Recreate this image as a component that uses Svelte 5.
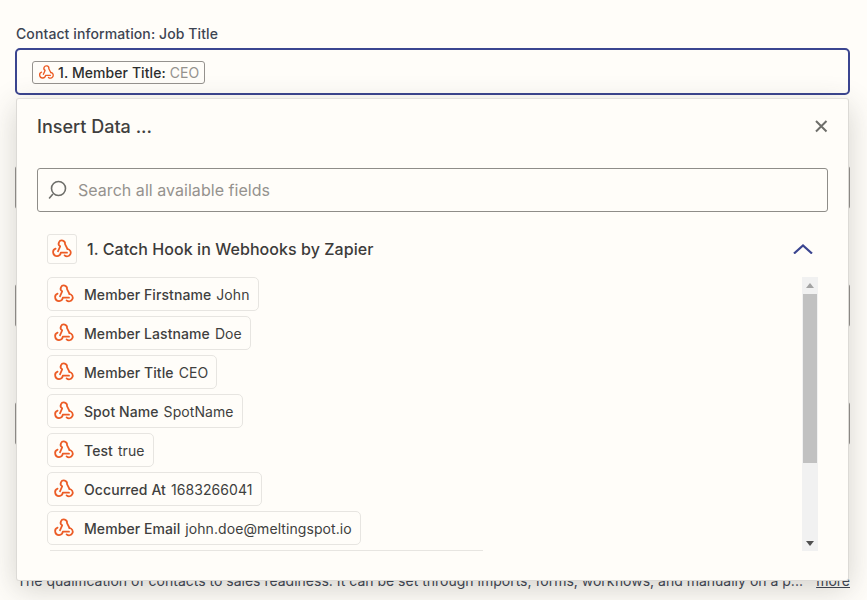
<script>
  // fields coming out of the catch hook step
  const fields = [
    { name: "Member Firstname", value: "John" },
    { name: "Member Lastname", value: "Doe" },
    { name: "Member Title", value: "CEO" },
    { name: "Spot Name", value: "SpotName" },
    { name: "Test", value: "true" },
    { name: "Occurred At", value: "1683266041" },
    { name: "Member Email", value: "john.doe@meltingspot.io" }
  ];
</script>

{#snippet hook(size)}
  <svg class="hook" width={size} height={size} viewBox="0 1 24 24" fill="none" stroke="#ec5c26" stroke-width="1.9" stroke-linecap="round" stroke-linejoin="round">
    <path d="M7.6 15.500 10 10.100A3.500 3.500 0 1 1 15.300 7.700L18 13" />
    <path d="M5 12.600A4.200 4.200 0 1 0 10.700 17H17.500" />
    <path d="M18 13A4 4 0 1 1 14.800 19.900" />
  </svg>
{/snippet}

<div class="page">
  <div class="label">Contact information: Job Title</div>
  <div class="field">
    <span class="token">
      {@render hook(17)}
      <b>1. Member Title:</b>
      <span class="token-value">CEO</span>
    </span>
  </div>

  <div class="behind">
    <div class="ghost"></div>
    <div class="ghost"></div>
    <div class="ghost"></div>
    <p class="hint">
      <span>The qualification of contacts to sales readiness. It can be set through imports, forms, workflows, and manually on a p...</span>
      <u>more</u>
    </p>
  </div>

  <div class="popup">
    <header>
      <h2>Insert Data ...</h2>
      <svg width="14" height="14" viewBox="0 0 14 14" stroke="#6e6e6a" stroke-width="2" fill="none">
        <path d="M2 2l10.500 10.500M12.500 2 2 12.500" />
      </svg>
    </header>

    <div class="search">
      <svg width="22" height="22" viewBox="0 0 22 22" fill="none" stroke="#6e6e6a" stroke-width="1.6" stroke-linecap="round">
        <circle cx="11.500" cy="9.500" r="7" />
        <path d="M5.500 15.500 2.500 19" />
      </svg>
      <span>Search all available fields</span>
    </div>

    <div class="step">
      <span class="step-icon">{@render hook(22)}</span>
      <h3>1. Catch Hook in Webhooks by Zapier</h3>
      <svg class="chevron" width="20" height="10" viewBox="0 0 20 10" fill="none" stroke="#3b4590" stroke-width="2.200">
        <path d="M1 9.500 10 1.500l9 8" />
      </svg>
    </div>

    <div class="results">
      <div class="list">
        {#each fields as field}
          <div class="item">
            {@render hook(22)}
            <b>{field.name}</b>
            <span>{field.value}</span>
          </div>
        {/each}
        <div class="rule"></div>
      </div>
      <div class="scrollbar">
        <span class="arrow up"></span>
        <div class="thumb"></div>
        <span class="arrow down"></span>
      </div>
    </div>
  </div>
</div>

<style>
  :global(body) {
    background: #fffdf9;
    overflow: hidden;
  }

  .page {
    position: relative;
    height: 600px;
    overflow: hidden;
    box-sizing: border-box;
    padding: 25px 17px 0 15px;
    font-family: Inter, "Liberation Sans", sans-serif;
    color: #403f3e;
  }

  .label {
    margin-left: 1px;
    font-size: 14px;
    line-height: 18px;
    font-weight: 500;
    letter-spacing: 0.1px;
    color: #3d4452;
  }

  .field {
    box-sizing: border-box;
    height: 47px;
    margin-top: 5px;
    padding: 11px 15px;
    border: 2px solid #3b4590;
    border-radius: 5px;
  }

  .token {
    display: inline-flex;
    align-items: center;
    box-sizing: border-box;
    height: 23px;
    padding: 0 5px 0 5px;
    gap: 3px;
    border: 1px solid #95928e;
    border-radius: 3px;
    font-size: 14px;
    color: #2d2e2e;
  }

  .token b {
    font-weight: 500;
    letter-spacing: 0.08px;
  }

  .token-value {
    margin-left: 1px;
    color: #95928e;
  }

  .behind {
    padding-top: 71px;
  }

  .ghost {
    box-sizing: border-box;
    height: 43px;
    margin-bottom: 75px;
    border-left: 2px solid #95928e;
    border-right: 2px solid #95928e;
    border-radius: 3px;
  }

  .hint {
    display: flex;
    justify-content: space-between;
    margin: 126px 0 0;
    padding: 0 0 0 2px;
    font-size: 14px;
    line-height: 20px;
    white-space: nowrap;
    color: #3d4452;
  }

  .popup {
    position: absolute;
    top: 98px;
    left: 16px;
    width: 833px;
    height: 483px;
    box-sizing: border-box;
    padding: 0 20px;
    background: #fffdf9;
    border: 1px solid #dcdad6;
    border-top-color: #e4e2de;
    border-radius: 3px;
    box-shadow: 0 8px 30px rgba(60, 58, 50, 0.22);
  }

  header {
    display: flex;
    align-items: center;
    justify-content: space-between;
    height: 54px;
  }

  h2 {
    margin: 0;
    font-size: 18px;
    font-weight: 500;
    color: #403f3e;
  }

  .search {
    display: flex;
    align-items: center;
    gap: 9px;
    box-sizing: border-box;
    height: 44px;
    margin-top: 15px;
    padding: 0 9px;
    border: 1px solid #8f8d89;
    border-radius: 3px;
    font-size: 16px;
    letter-spacing: 0.04px;
    color: #95928e;
  }

  .step {
    display: flex;
    align-items: center;
    height: 30px;
    margin: 22px 15px 0 10px;
  }

  .step-icon {
    display: flex;
    align-items: center;
    justify-content: center;
    box-sizing: border-box;
    width: 30px;
    height: 30px;
    border: 1px solid #e7e5e1;
    border-radius: 3px;
  }

  h3 {
    flex: 1;
    margin: 0 0 0 10px;
    font-size: 16px;
    font-weight: 500;
    letter-spacing: 0.06px;
    color: #3c3b3a;
  }

  .results {
    display: flex;
    justify-content: space-between;
    margin: 13px 10px 0;
    height: 274px;
  }

  .list {
    width: 436px;
    display: flex;
    flex-direction: column;
    align-items: flex-start;
    gap: 5px;
  }

  .item {
    display: flex;
    align-items: center;
    box-sizing: border-box;
    height: 34px;
    padding: 0 8px 0 5px;
    border: 1px solid #e7e5e1;
    border-radius: 5px;
    font-size: 14px;
    letter-spacing: 0.08px;
    color: #403f3e;
  }

  .item b {
    margin: 0 5px 0 9px;
    font-weight: 500;
  }

  .rule {
    align-self: stretch;
    height: 1px;
    margin: 0 0 0 3px;
    background: #e7e5e1;
  }

  .scrollbar {
    display: flex;
    flex-direction: column;
    align-items: center;
    width: 16px;
    padding: 0 1px;
    box-sizing: border-box;
    background: #f1f1f1;
  }

  .thumb {
    width: 14px;
    height: 169px;
    background: #c1c1c1;
    margin-bottom: auto;
  }

  .arrow {
    width: 0;
    height: 0;
    border-left: 4px solid transparent;
    border-right: 4px solid transparent;
  }

  .arrow.up {
    margin: 6px 0 6px;
    border-bottom: 5px solid #a3a3a3;
  }

  .arrow.down {
    margin: 0 0 5px;
    border-top: 5px solid #505050;
  }
</style>
